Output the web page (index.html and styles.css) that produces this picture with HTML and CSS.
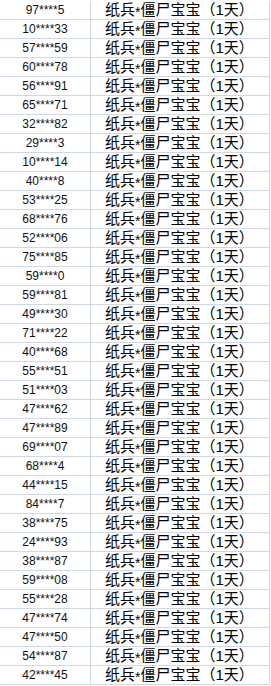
FILE: index.html
```html
<!DOCTYPE html>
<html lang="zh-CN">
<head>
<meta charset="utf-8">
<title>名单</title>
<link rel="stylesheet" href="styles.css">
</head>
<body>
<div class="sheet">
  <div class="row"><div class="id">97****5</div><div class="prize">纸兵<span class="star">*</span>僵尸宝宝（1天）</div></div>
  <div class="row"><div class="id">10****33</div><div class="prize">纸兵<span class="star">*</span>僵尸宝宝（1天）</div></div>
  <div class="row"><div class="id">57****59</div><div class="prize">纸兵<span class="star">*</span>僵尸宝宝（1天）</div></div>
  <div class="row"><div class="id">60****78</div><div class="prize">纸兵<span class="star">*</span>僵尸宝宝（1天）</div></div>
  <div class="row"><div class="id">56****91</div><div class="prize">纸兵<span class="star">*</span>僵尸宝宝（1天）</div></div>
  <div class="row"><div class="id">65****71</div><div class="prize">纸兵<span class="star">*</span>僵尸宝宝（1天）</div></div>
  <div class="row"><div class="id">32****82</div><div class="prize">纸兵<span class="star">*</span>僵尸宝宝（1天）</div></div>
  <div class="row"><div class="id">29****3</div><div class="prize">纸兵<span class="star">*</span>僵尸宝宝（1天）</div></div>
  <div class="row"><div class="id">10****14</div><div class="prize">纸兵<span class="star">*</span>僵尸宝宝（1天）</div></div>
  <div class="row"><div class="id">40****8</div><div class="prize">纸兵<span class="star">*</span>僵尸宝宝（1天）</div></div>
  <div class="row"><div class="id">53****25</div><div class="prize">纸兵<span class="star">*</span>僵尸宝宝（1天）</div></div>
  <div class="row"><div class="id">68****76</div><div class="prize">纸兵<span class="star">*</span>僵尸宝宝（1天）</div></div>
  <div class="row"><div class="id">52****06</div><div class="prize">纸兵<span class="star">*</span>僵尸宝宝（1天）</div></div>
  <div class="row"><div class="id">75****85</div><div class="prize">纸兵<span class="star">*</span>僵尸宝宝（1天）</div></div>
  <div class="row"><div class="id">59****0</div><div class="prize">纸兵<span class="star">*</span>僵尸宝宝（1天）</div></div>
  <div class="row"><div class="id">59****81</div><div class="prize">纸兵<span class="star">*</span>僵尸宝宝（1天）</div></div>
  <div class="row"><div class="id">49****30</div><div class="prize">纸兵<span class="star">*</span>僵尸宝宝（1天）</div></div>
  <div class="row"><div class="id">71****22</div><div class="prize">纸兵<span class="star">*</span>僵尸宝宝（1天）</div></div>
  <div class="row"><div class="id">40****68</div><div class="prize">纸兵<span class="star">*</span>僵尸宝宝（1天）</div></div>
  <div class="row"><div class="id">55****51</div><div class="prize">纸兵<span class="star">*</span>僵尸宝宝（1天）</div></div>
  <div class="row"><div class="id">51****03</div><div class="prize">纸兵<span class="star">*</span>僵尸宝宝（1天）</div></div>
  <div class="row"><div class="id">47****62</div><div class="prize">纸兵<span class="star">*</span>僵尸宝宝（1天）</div></div>
  <div class="row"><div class="id">47****89</div><div class="prize">纸兵<span class="star">*</span>僵尸宝宝（1天）</div></div>
  <div class="row"><div class="id">69****07</div><div class="prize">纸兵<span class="star">*</span>僵尸宝宝（1天）</div></div>
  <div class="row"><div class="id">68****4</div><div class="prize">纸兵<span class="star">*</span>僵尸宝宝（1天）</div></div>
  <div class="row"><div class="id">44****15</div><div class="prize">纸兵<span class="star">*</span>僵尸宝宝（1天）</div></div>
  <div class="row"><div class="id">84****7</div><div class="prize">纸兵<span class="star">*</span>僵尸宝宝（1天）</div></div>
  <div class="row"><div class="id">38****75</div><div class="prize">纸兵<span class="star">*</span>僵尸宝宝（1天）</div></div>
  <div class="row"><div class="id">24****93</div><div class="prize">纸兵<span class="star">*</span>僵尸宝宝（1天）</div></div>
  <div class="row"><div class="id">38****87</div><div class="prize">纸兵<span class="star">*</span>僵尸宝宝（1天）</div></div>
  <div class="row"><div class="id">59****08</div><div class="prize">纸兵<span class="star">*</span>僵尸宝宝（1天）</div></div>
  <div class="row"><div class="id">55****28</div><div class="prize">纸兵<span class="star">*</span>僵尸宝宝（1天）</div></div>
  <div class="row"><div class="id">47****74</div><div class="prize">纸兵<span class="star">*</span>僵尸宝宝（1天）</div></div>
  <div class="row"><div class="id">47****50</div><div class="prize">纸兵<span class="star">*</span>僵尸宝宝（1天）</div></div>
  <div class="row"><div class="id">54****87</div><div class="prize">纸兵<span class="star">*</span>僵尸宝宝（1天）</div></div>
  <div class="row"><div class="id">42****45</div><div class="prize">纸兵<span class="star">*</span>僵尸宝宝（1天）</div></div>
</div>
</body>
</html>
```

FILE: styles.css
```css
html, body {
  margin: 0;
  padding: 0;
  background: #ffffff;
}

.sheet {
  width: 270px;
  padding-top: 1px;
  display: flex;
  flex-direction: column;
}

.row {
  display: flex;
  height: 18px;
  border-bottom: 1px solid #d0d7e5;
}

.id {
  width: 90px;
  border-right: 1px solid #d0d7e5;
  display: flex;
  align-items: center;
  justify-content: center;
  font-family: "Liberation Sans", Arial, sans-serif;
  font-size: 12px;
  color: #111111;
  line-height: 18px;
}

.prize {
  width: 179px;
  box-sizing: border-box;
  border-right: 1px solid #d0d7e5;
  padding-left: 14px;
  font-family: "Liberation Sans", "Noto Sans CJK SC", sans-serif;
  font-size: 15px;
  color: #000000;
  line-height: 18px;
  white-space: nowrap;
  text-spacing-trim: space-all;
}

.star {
  font-size: 14px;
  line-height: 1;
  vertical-align: -2px;
}
```
